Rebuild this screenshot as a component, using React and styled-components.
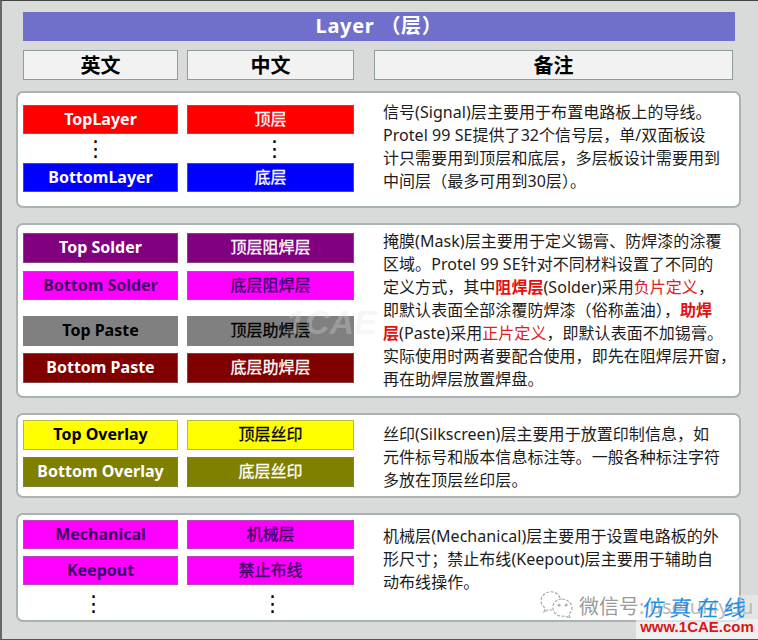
import styled, { createGlobalStyle } from "styled-components";

const GlobalStyle = createGlobalStyle`
  html, body {
    margin: 0;
    padding: 0;
    background: #d9dada;
  }
`;

const FONT = `"Noto Sans", "Noto Sans CJK SC", sans-serif`;

const Strong = styled.b`
  color: #e31010;
`;

const Red = styled.span`
  color: #e02020;
`;

const cards = [
  {
    height: 117,
    top: 12,
    noteTop: 8,
    rows: [
      { en: "TopLayer", zh: "顶层", bg: "#ff0000", color: "#ffffff", h: 29 },
      { dots: true, h: 29, left: 10, right: 8 },
      { en: "BottomLayer", zh: "底层", bg: "#0000ff", color: "#ffffff", h: 29 },
    ],
    note: [
      "信号(Signal)层主要用于布置电路板上的导线。",
      "Protel 99 SE提供了32个信号层，单/双面板设",
      "计只需要用到顶层和底层，多层板设计需要用到",
      "中间层（最多可用到30层）。",
    ],
  },
  {
    height: 175,
    top: 8,
    noteTop: 5,
    rows: [
      { en: "Top Solder", zh: "顶层阻焊层", bg: "#800080", color: "#ffffff", h: 30 },
      { en: "Bottom Solder", zh: "底层阻焊层", bg: "#ff00ff", color: "#3c0064", h: 29, gap: 8 },
      { en: "Top Paste", zh: "顶层助焊层", bg: "#808080", color: "#000000", h: 30, gap: 16 },
      { en: "Bottom Paste", zh: "底层助焊层", bg: "#800000", color: "#ffffff", h: 30, gap: 7 },
    ],
    note: [
      "掩膜(Mask)层主要用于定义锡膏、防焊漆的涂覆",
      "区域。Protel 99 SE针对不同材料设置了不同的",
      <>
        定义方式，其中<Strong>阻焊层</Strong>(Solder)采用<Red>负片定义</Red>，
      </>,
      <>
        即默认表面全部涂覆防焊漆（俗称盖油），<Strong>助焊</Strong>
      </>,
      <>
        <Strong>层</Strong>(Paste)采用<Red>正片定义</Red>，即默认表面不加锡膏。
      </>,
      "实际使用时两者要配合使用，即先在阻焊层开窗，",
      "再在助焊层放置焊盘。",
    ],
  },
  {
    height: 85,
    top: 5,
    noteTop: 8,
    rows: [
      { en: "Top Overlay", zh: "顶层丝印", bg: "#ffff00", color: "#000000", h: 30 },
      { en: "Bottom Overlay", zh: "底层丝印", bg: "#808000", color: "#ffffff", h: 30, gap: 7 },
    ],
    note: [
      "丝印(Silkscreen)层主要用于放置印制信息，如",
      "元件标号和版本信息标注等。一般各种标注字符",
      "多放在顶层丝印层。",
    ],
  },
  {
    height: 109,
    top: 5,
    noteTop: 10,
    rows: [
      { en: "Mechanical", zh: "机械层", bg: "#ff00ff", color: "#3c0064", h: 29 },
      { en: "Keepout", zh: "禁止布线", bg: "#ff00ff", color: "#3c0064", h: 29, gap: 7 },
      { dots: true, h: 30, left: 14, right: 4, gap: 4 },
    ],
    note: [
      "机械层(Mechanical)层主要用于设置电路板的外",
      "形尺寸；禁止布线(Keepout)层主要用于辅助自",
      "动布线操作。",
    ],
  },
];

const App = () => {
  return (
    <Page>
      <GlobalStyle />
      <Title>Layer （层）</Title>
      <HeaderRow>
        <HeaderCell>英文</HeaderCell>
        <HeaderCell>中文</HeaderCell>
        <HeaderCell>备注</HeaderCell>
      </HeaderRow>
      {cards.map((card, i) => (
        <Card key={i} $height={card.height}>
          <Chips $top={card.top}>
            {card.rows.map((row, j) =>
              row.dots ? (
                <ChipRow key={j} $gap={row.gap}>
                  <Dots $h={row.h} $right={row.left}>⋮</Dots>
                  <Dots $h={row.h} $left={row.right}>⋮</Dots>
                </ChipRow>
              ) : (
                <ChipRow key={j} $gap={row.gap}>
                  <Chip $h={row.h} $bg={row.bg} $color={row.color}>{row.en}</Chip>
                  <ChipZh $h={row.h} $bg={row.bg} $color={row.color}>{row.zh}</ChipZh>
                </ChipRow>
              )
            )}
          </Chips>
          <Note $top={card.noteTop}>
            {card.note.map((line, j) => (
              <NoteLine key={j}>{line}</NoteLine>
            ))}
          </Note>
        </Card>
      ))}
      <FaintMark>1CAE</FaintMark>
      <WeChatMark>
        <svg width="34" height="30" viewBox="0 0 34 30" fill="none" stroke="#a8a8a8" strokeWidth="1.2" strokeDasharray="3 1.5">
          <path d="M20 8C18 3 13 1 9 2C4 3 1 7 1 11C1 14 3 16 5 18L4 22L9 19.5C10 20 11 20 12 20" />
          <path d="M22 9C27 9 32 13 32 18C32 21 30 23 29 24L30 28L25 26C20 27 14 25 13 19C12 13 17 9 22 9Z" />
          <circle cx="19" cy="15" r="1" fill="#a8a8a8" />
          <circle cx="26" cy="15" r="1" fill="#a8a8a8" />
        </svg>
        <WeChatText>微信号: useful4you</WeChatText>
      </WeChatMark>
      <SiteMark>
        <SiteName>仿真在线</SiteName>
        <SiteUrl>www.1CAE.com</SiteUrl>
      </SiteMark>
    </Page>
  );
};

const Page = styled.div`
  position: relative;
  box-sizing: border-box;
  width: 758px;
  height: 640px;
  overflow: hidden;
  padding: 11px 0 0 14px;
  background: #d9dada;
  border-top: 1px solid #444;
  border-bottom: 1px solid #555;
  border-left: 2px solid #666;
  font-family: ${FONT};
`;

const Title = styled.div`
  box-sizing: border-box;
  width: 712px;
  height: 29px;
  margin-left: 7px;
  background: #7070cc;
  color: #ffffff;
  font-size: 20px;
  font-weight: 700;
  letter-spacing: 0.7px;
  line-height: 28px;
  text-align: center;
`;

const HeaderRow = styled.div`
  display: grid;
  grid-template-columns: 155px 167px 359px;
  column-gap: 9px;
  margin: 9px 0 0 7px;

  & > :last-child {
    margin-left: 11px;
    width: 359px;
  }
`;

const HeaderCell = styled.div`
  box-sizing: border-box;
  height: 30px;
  background: #f2f2f2;
  border: 1px solid #8f9c9c;
  color: #000000;
  font-size: 20px;
  font-weight: 700;
  line-height: 30px;
  text-align: center;
`;

const Card = styled.div`
  box-sizing: border-box;
  display: flex;
  width: 725px;
  height: ${(p) => p.$height}px;
  margin-top: 15px;
  padding-left: 5px;
  background: #ffffff;
  border: 2px solid #aab3b3;
  border-radius: 7px;

  ${HeaderRow} + & {
    margin-top: 11px;
  }
`;

const Chips = styled.div`
  width: 331px;
  flex-shrink: 0;
  padding-top: ${(p) => p.$top}px;
`;

const ChipRow = styled.div`
  display: grid;
  grid-template-columns: 155px 167px;
  column-gap: 9px;
  margin-top: ${(p) => p.$gap || 0}px;
`;

const Chip = styled.div`
  box-sizing: border-box;
  height: ${(p) => p.$h}px;
  background: ${(p) => p.$bg};
  border: 1px solid rgba(120, 130, 130, 0.55);
  color: ${(p) => p.$color};
  font-size: 16px;
  font-weight: 700;
  line-height: ${(p) => p.$h - 3}px;
  text-align: center;
  white-space: nowrap;
`;

const ChipZh = styled(Chip)`
  font-weight: 400;
  -webkit-text-stroke: 0.3px ${(p) => p.$color};
`;

const Dots = styled.div`
  height: ${(p) => p.$h}px;
  padding: 0 ${(p) => p.$right || 0}px 0 ${(p) => p.$left || 0}px;
  color: #000000;
  font-family: "DejaVu Sans", sans-serif;
  font-size: 22px;
  line-height: ${(p) => p.$h}px;
  text-align: center;
`;

const Note = styled.div`
  margin-left: 29px;
  padding-top: ${(p) => p.$top}px;
  color: #1c1c1c;
  font-size: 16px;
  letter-spacing: 0.05px;
  line-height: 23px;
`;

const NoteLine = styled.div`
  white-space: nowrap;
`;

const FaintMark = styled.div`
  position: absolute;
  left: 284px;
  top: 302px;
  color: rgba(225, 225, 225, 0.3);
  font-family: "Liberation Sans", sans-serif;
  font-size: 34px;
  font-style: italic;
  font-weight: 700;
  pointer-events: none;
`;

const WeChatMark = styled.div`
  position: absolute;
  left: 538px;
  top: 589px;
  display: flex;
  align-items: center;
  gap: 5px;
`;

const WeChatText = styled.span`
  color: #9a9a9a;
  font-size: 20px;
  white-space: nowrap;
`;

const SiteMark = styled.div`
  position: absolute;
  right: 0;
  bottom: 0;
  box-sizing: border-box;
  width: 122px;
  height: 44px;
  background: linear-gradient(rgba(255, 255, 255, 0.3) 55%, rgba(255, 255, 255, 0.6) 55%);
  text-align: center;
`;

const SiteName = styled.div`
  color: #1f8fe6;
  font-size: 22px;
  letter-spacing: 5px;
  line-height: 24px;
  transform: skewX(-6deg);
`;

const SiteUrl = styled.div`
  color: #d81818;
  font-family: "Liberation Sans", sans-serif;
  font-size: 15px;
  font-weight: 700;
  line-height: 16px;
  white-space: nowrap;
`;

export default App;
